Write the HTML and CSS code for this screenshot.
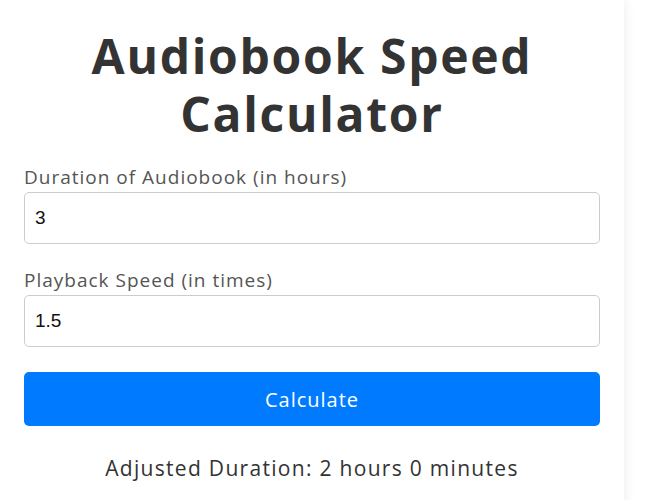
FILE: index.html
```html
<!DOCTYPE html>
<html lang="en">
<head>
<meta charset="utf-8">
<title>Audiobook Speed Calculator</title>
<link rel="stylesheet" href="styles.css">
</head>
<body>
<main class="card">
  <h1 class="title">Audiobook Speed Calculator</h1>
  <form class="form">
    <div class="field">
      <label class="label" for="duration">Duration of Audiobook (in hours)</label>
      <input class="input" id="duration" type="text" value="3">
    </div>
    <div class="field">
      <label class="label" for="speed">Playback Speed (in times)</label>
      <input class="input" id="speed" type="text" value="1.5">
    </div>
    <button class="button" type="button">Calculate</button>
  </form>
  <p class="result">Adjusted Duration: 2 hours 0 minutes</p>
</main>
</body>
</html>
```

FILE: styles.css
```css
html, body {
  margin: 0;
  padding: 0;
  background: #ffffff;
}

body {
  font-family: "Open Sans", "Liberation Sans", sans-serif;
  color: #333333;
}

.card {
  width: 576px;
  min-height: 560px;
  padding: 27px 24px 0;
  background: #ffffff;
  box-shadow: 0 0 12px rgba(0, 0, 0, 0.08);
}

.title {
  margin: 0 0 21px;
  font-size: 48px;
  line-height: 58px;
  font-weight: 700;
  text-align: center;
  color: #333333;
  letter-spacing: 1.7px;
}

.form {
  display: flex;
  flex-direction: column;
}

.field {
  display: flex;
  flex-direction: column;
  margin-bottom: 23px;
}

.label {
  font-size: 19px;
  line-height: 27px;
  letter-spacing: 1px;
  color: #555555;
  margin-bottom: 1px;
}

.input {
  box-sizing: border-box;
  height: 52px;
  padding: 0 10px;
  border: 1px solid #cccccc;
  border-radius: 5px;
  font-family: "Liberation Sans", Arial, sans-serif;
  font-size: 19px;
  color: #111111;
  background: #ffffff;
}

.button {
  height: 54px;
  margin-top: 2px;
  border: none;
  border-radius: 5px;
  background: #007bff;
  color: #ffffff;
  font-family: "Open Sans", "Liberation Sans", sans-serif;
  font-size: 20px;
  letter-spacing: 1px;
  cursor: pointer;
}

.result {
  margin: 30px 0 0;
  text-align: center;
  font-size: 21px;
  line-height: 24px;
  letter-spacing: 1.3px;
  color: #333333;
}
```
